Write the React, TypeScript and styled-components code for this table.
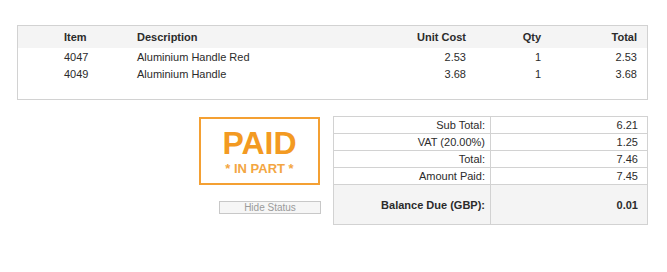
import styled, { createGlobalStyle } from "styled-components";

const GlobalStyle = createGlobalStyle`
  html, body {
    margin: 0;
    padding: 0;
    background: #ffffff;
  }
  body {
    font-family: "Liberation Sans", Arial, sans-serif;
    font-size: 11px;
    color: #2b2b2b;
  }
`;

type Line = { item: string; description: string; unitCost: string; qty: string; total: string };

const lines: Line[] = [
  { item: "4047", description: "Aluminium Handle Red", unitCost: "2.53", qty: "1", total: "2.53" },
  { item: "4049", description: "Aluminium Handle", unitCost: "3.68", qty: "1", total: "3.68" },
];

const totals = [
  { label: "Sub Total:", value: "6.21" },
  { label: "VAT (20.00%)", value: "1.25" },
  { label: "Total:", value: "7.46" },
  { label: "Amount Paid:", value: "7.45" },
];

const App = () => {
  return (
    <>
      <GlobalStyle />
      <Page>
        <ItemsBox>
          <ItemRow $head>
            <Cell>Item</Cell>
            <Cell>Description</Cell>
            <Cell $right>Unit Cost</Cell>
            <Cell $right>Qty</Cell>
            <Cell $right>Total</Cell>
          </ItemRow>
          {lines.map((l) => (
            <ItemRow key={l.item}>
              <Cell>{l.item}</Cell>
              <Cell>{l.description}</Cell>
              <Cell $right>{l.unitCost}</Cell>
              <Cell $right>{l.qty}</Cell>
              <Cell $right>{l.total}</Cell>
            </ItemRow>
          ))}
        </ItemsBox>

        <Summary>
          <StatusColumn>
            <Stamp>
              <StampTitle>PAID</StampTitle>
              <StampSub>* IN PART *</StampSub>
            </Stamp>
            <HideButton>Hide Status</HideButton>
          </StatusColumn>

          <TotalsTable>
            <tbody>
              {totals.map((t) => (
                <tr key={t.label}>
                  <LabelCell>{t.label}</LabelCell>
                  <ValueCell>{t.value}</ValueCell>
                </tr>
              ))}
              <BalanceRow>
                <LabelCell>Balance Due (GBP):</LabelCell>
                <ValueCell>0.01</ValueCell>
              </BalanceRow>
            </tbody>
          </TotalsTable>
        </Summary>
      </Page>
    </>
  );
};

export default App;

const Page = styled.div`
  width: 631px;
  padding: 25px 0 0 17px;
  display: flex;
  flex-direction: column;
  gap: 16px;
`;

const ItemsBox = styled.section`
  border: 1px solid #d2d2d2;
  padding-bottom: 17px;
`;

const ItemRow = styled.div<{ $head?: boolean }>`
  display: grid;
  grid-template-columns: 73px 229px 100px 75px 96px;
  padding: 0 10px 0 46px;
  height: ${({ $head }) => ($head ? "22px" : "17px")};
  align-items: center;
  background: ${({ $head }) => ($head ? "#f4f4f4" : "transparent")};
  font-weight: ${({ $head }) => ($head ? "bold" : "normal")};
`;

const Cell = styled.div<{ $right?: boolean }>`
  text-align: ${({ $right }) => ($right ? "right" : "left")};
  white-space: nowrap;
`;

const Summary = styled.div`
  display: flex;
  justify-content: flex-end;
  align-items: flex-start;
  gap: 12px;
`;

const StatusColumn = styled.div`
  width: 122px;
  display: flex;
  flex-direction: column;
  align-items: flex-end;
  padding-top: 1px;
  gap: 16px;
`;

const Stamp = styled.div`
  align-self: flex-start;
  width: 117px;
  height: 64px;
  border: 2px solid #f4a033;
  display: flex;
  flex-direction: column;
  align-items: center;
  color: #f39a22;
`;

const StampTitle = styled.div`
  font-size: 32px;
  font-weight: bold;
  line-height: 36px;
  margin-top: 6px;
`;

const StampSub = styled.div`
  font-size: 13px;
  font-weight: bold;
  line-height: 14px;
  margin-top: 1px;
  color: #f3a642;
`;

const HideButton = styled.button`
  width: 102px;
  height: 13px;
  padding: 0;
  border: 1px solid #c8c8c8;
  background: #f6f6f6;
  color: #9a9a9a;
  font-family: "Liberation Sans", Arial, sans-serif;
  font-size: 10px;
  line-height: 11px;
  cursor: pointer;
`;

const TotalsTable = styled.table`
  width: 315px;
  border-collapse: collapse;
  border: 1px solid #d2d2d2;

  td {
    border: 1px solid #d2d2d2;
    height: 16px;
    padding: 0;
    text-align: right;
    line-height: 16px;
  }
`;

const LabelCell = styled.td`
  width: 151px;
  padding-right: 5px !important;
`;

const ValueCell = styled.td`
  padding-right: 9px !important;
`;

const BalanceRow = styled.tr`
  background: #f4f4f4;
  font-weight: bold;

  td {
    height: 39px;
  }
`;
